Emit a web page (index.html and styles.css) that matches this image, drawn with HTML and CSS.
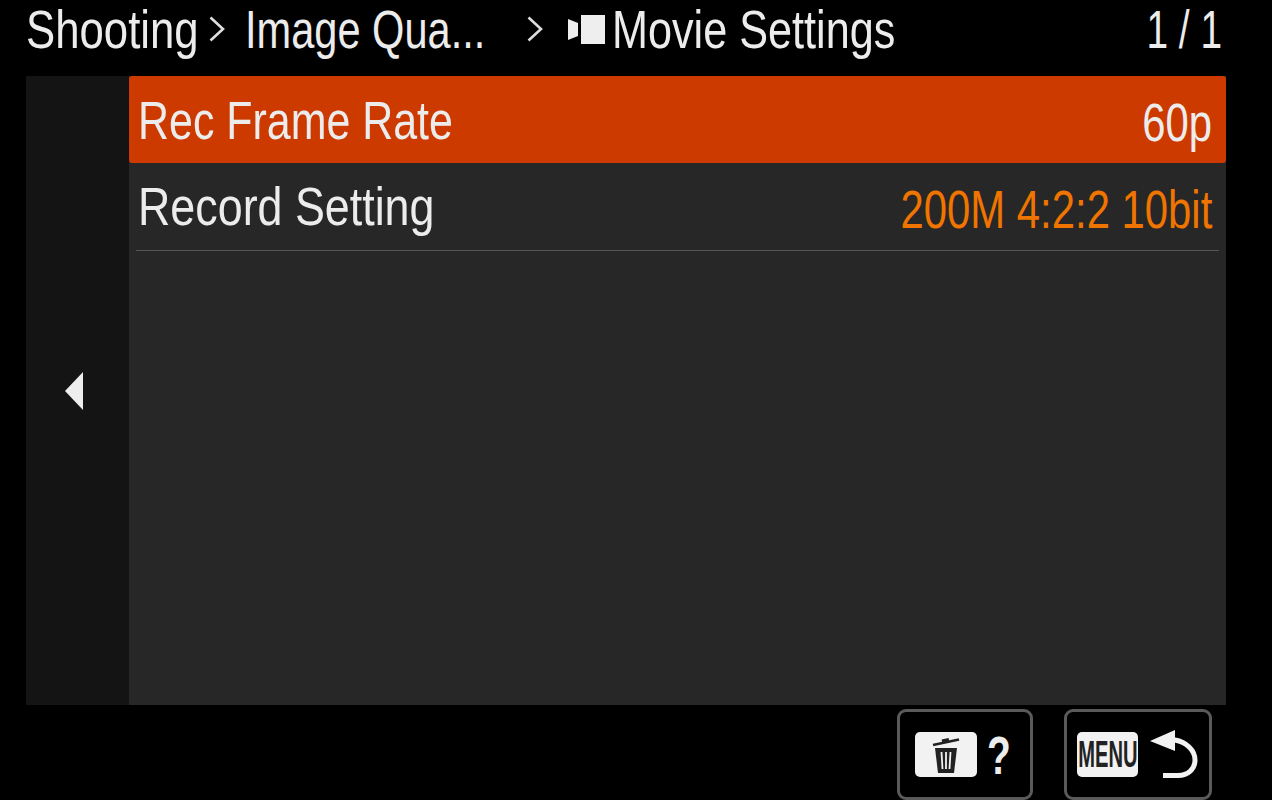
FILE: index.html
```html
<!DOCTYPE html>
<html lang="en">
  <head>
    <meta charset="UTF-8" />
    <title>Movie Settings</title>
    <link rel="stylesheet" href="styles.css">
  </head>
  <body>
    <div class="screen">
      <header class="crumbs">
        <span class="crumb-first"><span class="squeeze sq-shooting">Shooting</span></span>
        <svg class="sep" width="16" height="26" viewBox="0 0 16 26"><path d="M1.5 1.5 L14 13 L1.5 24.5" fill="none" stroke="#ddd" stroke-width="2.6"/></svg>
        <span class="crumb-mid"><span class="squeeze sq-image">Image Qua...</span></span>
        <svg class="sep" width="16" height="26" viewBox="0 0 16 26"><path d="M1.5 1.5 L14 13 L1.5 24.5" fill="none" stroke="#ddd" stroke-width="2.6"/></svg>
        <svg class="movie-icon" width="37" height="29" viewBox="0 0 37 29"><path d="M0 4 L10 8 V21 L0 25 Z" fill="#eee"/><rect x="13" y="0" width="24" height="29" fill="#eee"/></svg>
        <span class="crumb-last"><span class="squeeze sq-movie">Movie Settings</span></span>
        <span class="page-no"><span class="squeeze-r sq-page">1 / 1</span></span>
      </header>

      <div class="panel">
        <div class="side">
          <svg width="18" height="38" viewBox="0 0 18 38"><path d="M18 0 V38 L0 19 Z" fill="#eee"/></svg>
        </div>
        <div class="list">
          <div class="row row-active">
            <span class="squeeze sq-rate label">Rec Frame Rate</span>
            <span class="squeeze-r sq-val">60p</span>
          </div>
          <div class="row row-last">
            <span class="squeeze sq-record label">Record Setting</span>
            <span class="squeeze-r sq-val val-orange">200M 4:2:2 10bit</span>
          </div>
        </div>
      </div>

      <footer class="keys">
        <div class="key key-del">
          <div class="chip chip-trash">
            <svg width="28" height="38" viewBox="0 0 28 38">
              <path d="M1 9 L27 3.5" stroke="#222" stroke-width="2.6" fill="none"/>
              <path d="M10 5.5 L17 4" stroke="#222" stroke-width="4" fill="none"/>
              <path d="M3 12 H25 L22 37 H6 Z" fill="#222"/>
              <path d="M9.5 16 L10.5 33 M14 16 V33 M18.5 16 L17.5 33" stroke="#f2f2f2" stroke-width="1.8" fill="none"/>
            </svg>
          </div>
          <span class="help"><span class="squeeze sq-help">?</span></span>
        </div>
        <div class="key key-menu">
          <div class="chip chip-menu"><span class="sq-menu">MENU</span></div>
          <svg width="50" height="50" viewBox="0 0 50 50">
            <path d="M0 11 L25 0 V21 Z" fill="#f2f2f2"/>
            <path d="M22 10 H25 C36 12 45 20 45 30 C45 39 38 45.5 28 45.5 H13" fill="none" stroke="#f2f2f2" stroke-width="5"/>
          </svg>
        </div>
      </footer>
    </div>
  </body>
</html>
```

FILE: styles.css
```css
html,
body {
  margin: 0;
  background: #000;
}

body {
  width: 1272px;
  height: 800px;
  overflow: hidden;
  color: #ececec;
  font-family: "Liberation Sans", sans-serif;
}

.screen {
  display: flex;
  flex-direction: column;
  height: 800px;
}

/* no condensed font here, so text gets squeezed by hand */
.squeeze,
.squeeze-r {
  display: inline-block;
  white-space: nowrap;
}
.squeeze {
  transform-origin: left center;
}
.squeeze-r {
  transform-origin: right center;
}
.sq-shooting { transform: scaleX(0.81); }
.sq-image    { transform: scaleX(0.77); }
.sq-movie    { transform: scaleX(0.8); }
.sq-page     { transform: scaleX(0.72); }
.sq-rate     { transform: scaleX(0.795); }
.sq-record   { transform: scaleX(0.83); }
.sq-val      { transform: scaleX(0.775); }
.sq-help     { transform: scaleX(0.72); }
.sq-menu     { display: inline-block; transform: scaleX(0.56); }

/* top breadcrumb */
.crumbs {
  display: flex;
  align-items: center;
  height: 76px;
  box-sizing: border-box;
  padding: 0 50px 18px 26px;
  font-size: 54px;
  white-space: nowrap;
}
.crumb-first {
  width: 183px;
}
.crumbs .sep {
  flex: none;
}
.crumb-mid {
  margin-left: 20px;
  width: 282px;
}
.movie-icon {
  flex: none;
  margin-left: 25px;
}
.crumb-last {
  margin-left: 7px;
}
.page-no {
  margin-left: auto;
}

/* main panel */
.panel {
  display: flex;
  height: 629px;
  margin: 0 46px 0 26px;
  background: #272727;
}
.side {
  width: 103px;
  background: #141414;
  display: flex;
  align-items: center;
  justify-content: center;
}
.side svg {
  margin-right: 8px;
}
.list {
  flex: 1;
}
.row {
  display: flex;
  justify-content: space-between;
  align-items: center;
  height: 87px;
  box-sizing: border-box;
  padding: 5px 14px 0 9px;
  font-size: 54px;
}
.row .label {
  margin-top: -5px;
}
.row-active {
  background: #cc3a00;
  border-radius: 3px;
}
.row-last {
  height: 88px;
  margin: 0 7px;
  padding: 4px 7px 0 2px;
  border-bottom: 1px solid #555;
}
.val-orange {
  color: #f07400;
}

/* bottom buttons */
.keys {
  display: flex;
  justify-content: flex-end;
  gap: 31px;
  padding: 4px 60px 0 0;
}
.key {
  display: flex;
  align-items: center;
  box-sizing: border-box;
  height: 91px;
  border: 3px solid #5a5a5a;
  border-radius: 9px;
}
.key-del {
  width: 136px;
  padding-left: 15px;
  gap: 10px;
}
.key-menu {
  width: 148px;
  padding-left: 10px;
  gap: 12px;
}
.chip {
  display: flex;
  align-items: center;
  justify-content: center;
  height: 45px;
  background: #f2f2f2;
  border-radius: 5px;
}
.chip-trash {
  width: 62px;
}
.chip-menu {
  width: 61px;
  color: #222;
  font-size: 36px;
  font-weight: 700;
}
.help {
  font-size: 54px;
  font-weight: 700;
}
```
